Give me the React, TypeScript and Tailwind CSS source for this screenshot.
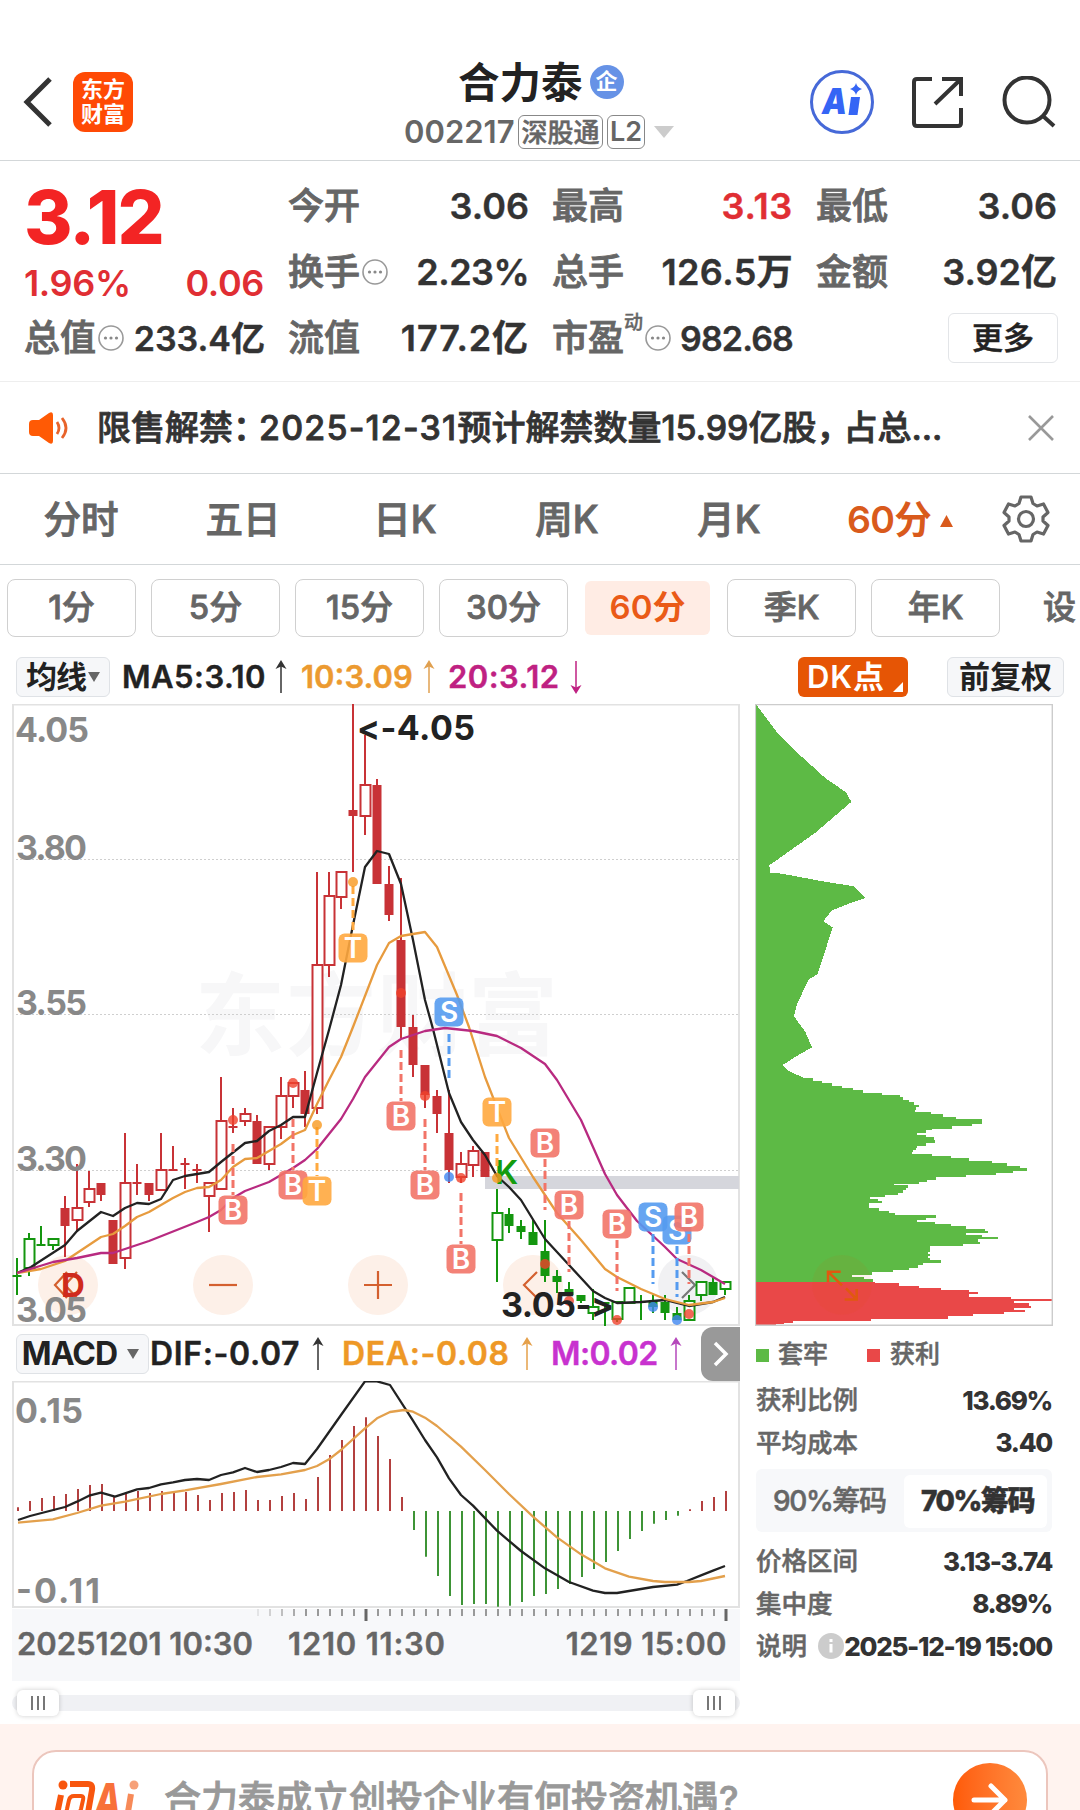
import type { ReactNode } from "react";

type Pt = [number, number];

/* Candle: high, low, body top, body bottom, kind.
   Upper case = hollow body, lower case = filled body. */
type Candle = [number, number, number, number, "R" | "r" | "G" | "g"];

const CANDLES: Candle[] = [
  [1258, 1295, 1275, 1277, "g"],
  [1233, 1276, 1239, 1268, "G"],
  [1226, 1246, 1244, 1246, "g"],
  [1238, 1250, 1239, 1245, "G"],
  [1196, 1257, 1208, 1226, "r"],
  [1164, 1231, 1208, 1220, "R"],
  [1171, 1207, 1189, 1202, "R"],
  [1183, 1201, 1183, 1195, "r"],
  [1220, 1264, 1220, 1264, "r"],
  [1133, 1269, 1183, 1258, "R"],
  [1164, 1195, 1182, 1184, "r"],
  [1183, 1201, 1183, 1195, "r"],
  [1133, 1190, 1170, 1190, "R"],
  [1146, 1171, 1169, 1171, "r"],
  [1158, 1189, 1163, 1165, "r"],
  [1164, 1183, 1169, 1171, "r"],
  [1183, 1232, 1183, 1196, "R"],
  [1077, 1189, 1121, 1189, "R"],
  [1108, 1133, 1126, 1128, "r"],
  [1108, 1126, 1114, 1121, "R"],
  [1115, 1164, 1121, 1164, "r"],
  [1127, 1170, 1127, 1164, "R"],
  [1077, 1139, 1096, 1127, "R"],
  [1083, 1108, 1083, 1096, "R"],
  [1071, 1127, 1090, 1114, "r"],
  [872, 1114, 965, 1108, "R"],
  [872, 977, 896, 965, "R"],
  [872, 909, 872, 897, "R"],
  [704, 872, 810, 816, "r"],
  [735, 835, 785, 816, "R"],
  [779, 884, 785, 884, "r"],
  [866, 921, 884, 915, "r"],
  [878, 1038, 940, 1027, "r"],
  [1015, 1077, 1027, 1065, "r"],
  [1065, 1108, 1065, 1095, "r"],
  [1090, 1133, 1096, 1114, "r"],
  [1090, 1183, 1133, 1170, "r"],
  [1152, 1183, 1164, 1177, "R"],
  [1146, 1177, 1151, 1165, "R"],
  [1152, 1177, 1152, 1177, "r"],
  [1189, 1282, 1213, 1240, "G"],
  [1208, 1233, 1214, 1226, "g"],
  [1220, 1239, 1226, 1232, "g"],
  [1220, 1245, 1232, 1245, "g"],
  [1220, 1282, 1251, 1276, "g"],
  [1270, 1293, 1276, 1282, "g"],
  [1282, 1296, 1289, 1295, "g"],
  [1295, 1303, 1295, 1301, "g"],
  [1289, 1320, 1307, 1313, "G"],
  [1302, 1326, 1302, 1304, "g"],
  [1302, 1322, 1302, 1319, "G"],
  [1288, 1303, 1288, 1303, "G"],
  [1295, 1320, 1301, 1303, "g"],
  [1295, 1313, 1301, 1307, "g"],
  [1295, 1320, 1302, 1313, "g"],
  [1307, 1320, 1313, 1320, "g"],
  [1295, 1320, 1301, 1320, "G"],
  [1282, 1301, 1282, 1295, "G"],
  [1277, 1295, 1282, 1295, "g"],
  [1282, 1295, 1282, 1289, "G"],
];

const MA5: Pt[] = [[17, 1273], [31, 1267], [65, 1245], [77, 1231], [101, 1212], [113, 1216], [125, 1208], [137, 1203], [149, 1204], [161, 1199], [173, 1180], [185, 1176], [209, 1172], [221, 1162], [245, 1143], [257, 1141], [269, 1131], [281, 1125], [293, 1117], [305, 1117], [317, 1073], [329, 1030], [341, 985], [353, 925], [365, 867], [377, 851], [389, 854], [401, 884], [413, 940], [425, 1000], [433, 1029], [449, 1093], [461, 1122], [473, 1140], [485, 1155], [497, 1176], [509, 1187], [521, 1200], [545, 1239], [569, 1265], [593, 1291], [605, 1298], [617, 1303], [641, 1302], [665, 1300], [689, 1306], [713, 1302], [725, 1297]];
const MA10: Pt[] = [[17, 1273], [41, 1269], [65, 1261], [101, 1237], [113, 1234], [125, 1226], [137, 1217], [149, 1212], [173, 1198], [185, 1192], [197, 1188], [209, 1187], [221, 1180], [233, 1167], [245, 1159], [257, 1158], [281, 1144], [293, 1135], [305, 1130], [317, 1104], [329, 1080], [341, 1057], [353, 1027], [377, 965], [389, 943], [401, 936], [425, 932], [437, 947], [457, 995], [469, 1027], [485, 1077], [509, 1138], [533, 1177], [557, 1213], [581, 1240], [605, 1269], [617, 1277], [641, 1289], [665, 1299], [689, 1305], [713, 1302], [725, 1298]];
const MA20: Pt[] = [[17, 1273], [53, 1262], [77, 1258], [101, 1253], [113, 1253], [149, 1241], [197, 1222], [209, 1217], [221, 1210], [233, 1198], [245, 1191], [269, 1182], [293, 1168], [305, 1160], [317, 1149], [341, 1119], [353, 1099], [365, 1077], [389, 1047], [401, 1039], [425, 1031], [445, 1028], [473, 1031], [497, 1036], [521, 1048], [545, 1064], [557, 1080], [581, 1120], [605, 1174], [617, 1195], [637, 1221], [665, 1247], [677, 1259], [701, 1270], [725, 1284]];

/* Trade marks: letter, x, badge centre y, dash from, dash to, dot y */
const MARKS: ["B" | "S" | "T", number, number, number, number, number][] = [
  ["B", 233, 1210, 1144, 1195, 1120],
  ["B", 293, 1185, 1119, 1170, 1083],
  ["T", 317, 1191, 1127, 1176, 1125],
  ["T", 353, 948, 886, 933, 882],
  ["B", 401, 1116, 1050, 1101, 993],
  ["B", 425, 1185, 1119, 1170, 1096],
  ["S", 449, 1012, 1034, 1080, 1177],
  ["B", 461, 1259, 1193, 1244, 1178],
  ["T", 497, 1112, 1134, 1170, 1178],
  ["B", 545, 1143, 1159, 1210, 1264],
  ["B", 569, 1205, 1221, 1272, 1301],
  ["B", 617, 1224, 1240, 1291, 1320],
  ["S", 653, 1217, 1234, 1284, 1307],
  ["S", 677, 1230, 1246, 1297, 1320],
  ["B", 689, 1217, 1234, 1284, 1314],
];

const MARK_FILL = { B: "#f27468", T: "#ffa93f", S: "#559bf0" };
const DOT_FILL = { B: "#f0412c", T: "#f8981f", S: "#3f86f0" };

const DIF: Pt[] = [[18, 600], [30, 588], [65, 561], [77, 545], [89, 527], [101, 518], [115, 530], [125, 520], [137, 508], [149, 504], [161, 493], [173, 487], [185, 480], [197, 477], [209, 480], [221, 465], [233, 457], [245, 444], [257, 456], [269, 450], [281, 441], [293, 429], [305, 432], [317, 387], [341, 285], [365, 184], [377, 184], [390, 195], [413, 302], [425, 360], [437, 412], [449, 475], [461, 525], [473, 557], [497, 632], [521, 693], [545, 745], [569, 786], [593, 812], [605, 819], [617, 819], [653, 801], [677, 794], [687, 783], [701, 766], [713, 752], [725, 738]];
const DEA: Pt[] = [[18, 608], [53, 598], [77, 579], [101, 557], [125, 545], [161, 522], [185, 511], [221, 492], [257, 471], [281, 463], [305, 450], [317, 438], [329, 418], [341, 390], [365, 325], [377, 295], [390, 276], [404, 270], [413, 275], [425, 293], [437, 318], [461, 380], [485, 450], [509, 522], [533, 590], [557, 652], [581, 703], [605, 745], [629, 770], [653, 783], [665, 786], [689, 786], [701, 783], [725, 768]];
const MACD_BARS = [562, 543, 534, 528, 522, 507, 495, 492, 530, 519, 513, 519, 513, 513, 516, 525, 540, 519, 516, 510, 540, 540, 528, 519, 537, 471, 405, 360, 318, 292, 348, 417, 531, 630, 710, 768, 828, 855, 852, 852, 860, 857, 846, 828, 822, 807, 792, 771, 747, 726, 693, 657, 633, 611, 600, 587, 568, 543, 531, 513];

/* Chip distribution rows as [y, width]; smooth upper part, stepped lower part */
const CHIP_SMOOTH: Pt[] = [[35, 48], [107, 115], [150, 170], [212, 255], [247, 318], [270, 334], [345, 225], [423, 88], [441, 90], [443, 125], [459, 230], [474, 343], [502, 377], [516, 325], [532, 275], [558, 250], [573, 278], [685, 233], [698, 207], [755, 172], [787, 162], [825, 196], [862, 216], [882, 172], [905, 127], [920, 148], [935, 190]];
const CHIP_STEPS: Pt[] = [[938, 218], [944, 245], [949, 275], [955, 306], [961, 338], [966, 368], [972, 425], [976, 480], [982, 490], [988, 508], [993, 522], [1000, 536], [1006, 528], [1013, 525], [1018, 573], [1023, 610], [1029, 648], [1034, 725], [1040, 725], [1046, 695], [1052, 636], [1058, 575], [1062, 557], [1068, 530], [1074, 557], [1079, 582], [1085, 584], [1093, 557], [1099, 530], [1104, 527], [1110, 518], [1115, 516], [1119, 575], [1124, 632], [1130, 687], [1136, 755], [1141, 800], [1147, 840], [1153, 860], [1159, 818], [1165, 767], [1170, 677], [1175, 587], [1181, 560], [1187, 537], [1191, 463], [1195, 503], [1201, 497], [1207, 490], [1213, 475], [1218, 436], [1222, 390], [1227, 413], [1232, 425], [1238, 388], [1250, 417], [1256, 447], [1262, 465], [1267, 587], [1273, 558], [1278, 530], [1283, 585], [1289, 632], [1294, 677], [1299, 735], [1305, 743], [1310, 678], [1314, 726], [1320, 775], [1325, 715], [1331, 720], [1336, 668], [1342, 571], [1355, 563], [1360, 571], [1366, 563], [1371, 570], [1376, 603], [1381, 548], [1387, 535], [1393, 508], [1398, 458], [1404, 395], [1410, 337], [1416, 372], [1421, 400], [1427, 405]];
const CHIP_RED: Pt[] = [[1427, 405], [1431, 476], [1437, 538], [1442, 602], [1448, 687], [1453, 715], [1458, 687], [1464, 812], [1469, 936], [1474, 823], [1479, 868], [1486, 872], [1490, 823], [1495, 855], [1500, 793], [1506, 698], [1511, 625], [1516, 393], [1521, 158], [1526, 133], [1530, 107], [1532, 107]];

const line = (pts: Pt[]) => pts.map((p) => p.join(",")).join(" ");
const macdLine = (pts: Pt[]) => pts.map(([x, y]) => `${x},${1320 + y / 3}`).join(" ");
const steps = (pts: Pt[]) => pts.map(([y, w], i) => `H${w}V${pts[i + 1]?.[0] ?? y}`).join("");

/* ── Small icons ── */
function MoreDots() {
  return (
    <svg viewBox="0 0 26 26" className="ml-[2px] size-[26px] shrink-0" fill="none" stroke="#999" strokeWidth="1.6">
      <circle cx="13" cy="13" r="12" />
      <g fill="#888" stroke="none">
        <circle cx="7.5" cy="13" r="1.6" />
        <circle cx="13" cy="13" r="1.6" />
        <circle cx="18.5" cy="13" r="1.6" />
      </g>
    </svg>
  );
}

function Arrow({ color, down = false }: { color: string; down?: boolean }) {
  return (
    <svg viewBox="0 0 12 34" className={down ? "h-[34px] w-3 shrink-0 rotate-180" : "h-[34px] w-3 shrink-0"}>
      <path d="M6 4V33" stroke={color} strokeWidth="1.5" />
      <path d="M6 0L11.5 9L6 6.5L0.5 9Z" fill={color} />
    </svg>
  );
}

function Caret({ className }: { className: string }) {
  return (
    <svg viewBox="0 0 12 10" className={className} fill="currentColor" preserveAspectRatio="none">
      <path d="M0 0H12L6 10Z" />
    </svg>
  );
}

/* ── Quote cell: label on the left, value on the right ── */
function Cell({ label, value, extra, className = "text-[#333]" }: { label: string; value: ReactNode; extra?: ReactNode; className?: string }) {
  return (
    <div className="flex h-[66px] items-center justify-between whitespace-nowrap">
      <span className="flex items-center font-medium text-[#666] [-webkit-text-stroke:0.9px]">
        {label}
        {extra}
      </span>
      <span className={`-mr-[1px] font-semibold [-webkit-text-stroke:0.4px] ${className}`}>{value}</span>
    </div>
  );
}

function Header() {
  return (
    <header className="flex h-[161px] items-start border-b border-[#d3d7d9] pt-[60px]">
      <svg viewBox="0 0 30 50" className="mt-[17px] ml-[23px] h-[50px] w-[30px] shrink-0" fill="none" stroke="#333" strokeWidth="5">
        <path d="M27 2L4 25L27 48" />
      </svg>
      <div className="mt-3 ml-5 flex size-[60px] shrink-0 flex-col items-center justify-center rounded-xl bg-[#ff4a05] text-[22px] leading-[25px] font-bold text-white">
        <span>东方</span>
        <span>财富</span>
      </div>
      <div className="ml-[271px] flex w-[285px] shrink-0 flex-col">
        <div className="ml-[54px] flex h-[46px] items-center text-[41.500px] font-bold text-[#222]">
          合力泰
          <span className="mb-[3px] ml-[7px] flex size-[34px] items-center justify-center rounded-full bg-[#6692e6] text-[22px] font-bold text-white">企</span>
        </div>
        <div className="mt-2 flex h-[36px] items-center gap-1 whitespace-nowrap text-[#666]">
          <span className="w-[110px] text-[31px] font-semibold">002217</span>
          <span className="flex h-[34px] w-[85px] items-center justify-center rounded-md border-[1.5px] border-[#888] text-[26px] font-medium [-webkit-text-stroke:0.5px]">深股通</span>
          <span className="flex h-[34px] w-[38px] items-center justify-center rounded-md border-[1.5px] border-[#888] text-[27px] font-semibold">L2</span>
          <Caret className="ml-[5px] h-3 w-5 shrink-0 text-[#ccc]" />
        </div>
      </div>
      <svg viewBox="0 0 66 66" className="mt-[9px] ml-[120px] size-[66px] shrink-0">
        <circle cx="33" cy="33" r="30.5" fill="none" stroke="#4669d8" strokeWidth="3" />
        <text x="13" y="45" fontFamily="Inter" fontWeight="900" fontStyle="italic" fontSize="36" fill="#3565f5" textLength="25" lengthAdjust="spacingAndGlyphs">A</text>
        <path d="M42 28H51L48.500 46H39.500Z" fill="#3565f5" />
        <path d="M47 14Q48 18.500 53 20Q48 21.500 47 26Q46 21.500 41 20Q46 18.500 47 14Z" fill="#3565f5" />
      </svg>
      <svg viewBox="0 0 52 52" className="mt-4 ml-9 size-[52px] shrink-0" fill="none" stroke="#333" strokeWidth="4">
        <path d="M21 3H6Q3 3 3 6V47Q3 50 6 50H47Q50 50 50 47V32" />
        <path d="M31 3H50V20M50 3L24 28" />
      </svg>
      <svg viewBox="0 0 54 54" className="mt-4 ml-[39px] size-[54px] shrink-0" fill="none" stroke="#333" strokeWidth="4">
        <circle cx="25" cy="24" r="22.500" />
        <path d="M41 40L52 50" />
      </svg>
    </header>
  );
}

function Quote() {
  return (
    <section className="h-[221px] border-b border-[#eee] px-6 pt-3 text-[36px]">
      <div className="grid grid-cols-4 gap-x-6">
        <div className="row-span-2 h-[132px] text-[#e02e33]">
          <div className="h-[87px] pt-[3px] text-[74px] leading-[82px] font-extrabold tracking-[-0.025em] text-[#f32424]">3.12</div>
          <div className="flex justify-between leading-[46px] font-semibold tracking-[-0.01em]">
            <span>1.96%</span>
            <span>0.06</span>
          </div>
        </div>
        <Cell label="今开" value="3.06" />
        <Cell label="最高" value="3.13" className="text-[#e02e33] tracking-[0.02em]" />
        <Cell label="最低" value="3.06" />
        <Cell label="换手" value="2.23%" extra={<MoreDots />} className="text-[#333] tracking-[-0.015em]" />
        <Cell label="总手" value="126.5万" className="text-[#333] tracking-[0.01em]" />
        <Cell label="金额" value="3.92亿" />
        <Cell label="总值" value={<span className="text-[34px]">233.4亿</span>} extra={<MoreDots />} />
        <Cell label="流值" value="177.2亿" className="text-[#333] tracking-[0.025em]" />
        <Cell
          label="市盈"
          value={<span className="text-[34px] tracking-[-0.025em]">982.68</span>}
          extra={
            <>
              <sup className="-top-4 text-[19px] leading-none [-webkit-text-stroke:0.4px]">动</sup>
              <MoreDots />
            </>
          }
        />
        <div className="flex h-[66px] items-center justify-end">
          <button className="-mr-[2px] h-[50px] w-[110px] rounded-md border border-[#e3e5e8] text-[31px] font-medium text-[#222] [-webkit-text-stroke:0.5px]">更多</button>
        </div>
      </div>
    </section>
  );
}

function Notice() {
  return (
    <section className="flex h-[92px] items-center border-b border-[#d3d7d9]">
      <svg viewBox="0 0 40 32" className="ml-[29px] h-8 w-10">
        <path d="M4 8H10L20 1Q24 -1 24 3V29Q24 33 20 31L10 24H4Q0 24 0 20V12Q0 8 4 8Z" fill="#ff5a05" />
        <path d="M28 10Q32 16 28 22M33 6Q41 16 33 26" fill="none" stroke="#e8632a" strokeWidth="2.8" />
      </svg>
      <p className="ml-[28px] w-[881px] text-[34px] font-medium whitespace-nowrap text-[#333] [-webkit-text-stroke:0.8px]">
        限售解禁<span className="tracking-[-8px]">：</span>
        <span className="tracking-[0.035em]">2025-12-31</span>预计解禁数量<span>15.99</span>亿股
        <span className="tracking-[-7px]">，</span>占总...
      </p>
      <svg viewBox="0 0 26 26" className="ml-[50px] size-[26px]" stroke="#999" strokeWidth="2.6">
        <path d="M1 1L25 25M25 1L1 25" />
      </svg>
    </section>
  );
}

function Tabs() {
  return (
    <nav className="flex h-[91px] items-center border-b border-[#d3d7d9] pt-[3px] text-[37.500px] font-medium text-[#666]">
      {["分时", "五日", "日K", "周K", "月K"].map((t) => (
        <span key={t} className="w-[162px] text-center [-webkit-text-stroke:0.9px]">
          {t}
        </span>
      ))}
      <span className="ml-[37px] flex w-[154px] items-center font-semibold tracking-[-0.02em] text-[#d95a1c]">
        60分
        <Caret className="ml-[9px] h-3 w-[13px] rotate-180" />
      </span>
      <svg viewBox="-25 -25 50 50" className="-mt-1 size-[50px]" fill="none" stroke="#666" strokeWidth="3.200" strokeLinejoin="round">
        <path d="M-5 -22H5L7 -15.500L11 -13L17.500 -15L22 -6.500L17 -2V2L22 6.500L17.500 15L11 13L7 15.500L5 22H-5L-7 15.500L-11 13L-17.500 15L-22 6.500L-17 2V-2L-22 -6.500L-17.500 -15L-11 -13L-7 -15.500Z" />
        <circle r="7.500" />
      </svg>
    </nav>
  );
}

function Periods() {
  return (
    <div className="flex h-[85px] items-center gap-[15px] overflow-hidden pl-[7px] text-[33px] font-medium whitespace-nowrap text-[#666]">
      {["1分", "5分", "15分", "30分", "60分", "季K", "年K"].map((p) => (
        <span
          key={p}
          className={
            p === "60分"
              ? "mx-[2px] flex h-[54px] w-[125px] shrink-0 items-center justify-center rounded-md bg-[#ffece4] font-semibold text-[#ea5a17]"
              : "flex h-[58px] w-[129px] shrink-0 items-center justify-center rounded-lg border-[1.5px] border-[#d0d0d0] [-webkit-text-stroke:0.8px]"
          }
        >
          {p}
        </span>
      ))}
      <span className="ml-[28px] [-webkit-text-stroke:0.8px]">设</span>
    </div>
  );
}

function IndicatorBar() {
  return (
    <div className="flex h-[54px] items-center pl-4 text-[31px] font-semibold whitespace-nowrap">
      <span className="flex h-10 w-[94px] items-center justify-center gap-[2px] rounded-md border border-[#dfe2e6] bg-[#f6f7f9] tracking-[-0.03em] text-[#222]">
        均线
        <Caret className="h-[10px] w-3 text-[#666]" />
      </span>
      <span className="ml-3 w-[153px] tracking-[0.015em] text-[#222] [-webkit-text-stroke:0.4px]">MA5:3.10</span>
      <Arrow color="#333" />
      <span className="ml-[14px] w-[122px] text-[#ec9a30] [-webkit-text-stroke:0.4px]">10:3.09</span>
      <Arrow color="#e0a050" />
      <span className="ml-[13px] w-[122px] tracking-[0.015em] text-[#bf2182] [-webkit-text-stroke:0.4px]">20:3.12</span>
      <Arrow color="#bf2182" down />
      <span className="relative ml-[216px] flex h-10 w-[110px] items-center rounded-md bg-[#e65505] pl-[9px] tracking-[0.03em] text-white">
        DK点
        <svg viewBox="0 0 10 10" className="absolute right-[5px] bottom-[5px] size-[10px]" fill="#fff">
          <path d="M10 0V10H0Z" />
        </svg>
      </span>
      <span className="ml-[39px] flex h-10 w-[117px] items-center justify-center rounded-md border border-[#dfe2e6] bg-[#f6f7f9] text-[#222]">前复权</span>
    </div>
  );
}

function RoundButton({ x, d, grey = false }: { x: number; d: string; grey?: boolean }) {
  return (
    <g transform={`translate(${x} 1285)`}>
      <circle r="30" fill={grey ? "#f1f1f3" : "#fdf0e8"} />
      <path d={d} fill="none" stroke={grey ? "#777" : "#d4602f"} strokeWidth="2.2" />
    </g>
  );
}

function PriceChart() {
  return (
    <svg viewBox="12 704 728 622" className="block h-[622px] w-[728px] [font-feature-settings:'calt'_0]" fontFamily="Inter" fontWeight="600">
      <g fontFamily="Noto Sans CJK SC" fontWeight="700" fontSize="90" fill="#f7f7f8">
        <text x="195" y="1048" textLength="363">东方财富</text>
      </g>
      <g stroke="#cfcfcf" strokeDasharray="2 2">
        <path d="M12 859.500H739M12 1014.500H739M12 1170.500H739" />
      </g>
      <rect x="13" y="704.500" width="726" height="620.500" fill="none" stroke="#e2e2e2" strokeWidth="2" />
      <rect x="485" y="1176" width="254" height="13" fill="#d5d6dc" />

      <RoundButton x={68} d="M-1 -13L-13 0L-1 13M9 -13L-3 0L9 13" />
      <text x="61" y="1297" fontSize="33" fontWeight="700" fill="#cf2a1c">D</text>
      <RoundButton x={223} d="M-14 0H14" />
      <RoundButton x={378} d="M-14 0H14M0 -14V14" />
      <RoundButton x={533} d="M4 -13L-9 0L4 13" />
      <RoundButton x={688} d="M-6 -13L7 0L-6 13" grey />

      {CANDLES.map(([hi, lo, top, bot, kind], i) => {
        const x = 17 + i * 12;
        const color = kind === "R" || kind === "r" ? "#c83236" : "#14960f";
        const hollow = kind === "R" || kind === "G";
        return (
          <g key={i} fill={hollow ? "#fff" : color} stroke={color} strokeWidth="2">
            <path d={`M${x} ${hi}V${lo}`} />
            {hollow ? (
              <rect x={x - 4.5} y={top} width="10" height={bot - top} />
            ) : (
              <rect x={x - 4.5} y={top} width="9" height={bot - top} stroke="none" />
            )}
          </g>
        );
      })}

      <g fontSize="34" fontWeight="700" fill="#888">
        <text x="15" y="742" textLength="74">4.05</text>
        <text x="16" y="860" textLength="71">3.80</text>
        <text x="16" y="1015" textLength="71">3.55</text>
        <text x="16" y="1171" textLength="71">3.30</text>
        <text x="16" y="1322" textLength="71">3.05</text>
      </g>

      <g fill="none" strokeWidth="2.300" strokeLinejoin="round">
        <polyline points={line(MA5)} stroke="#222" />
        <polyline points={line(MA10)} stroke="#e79b3e" />
        <polyline points={line(MA20)} stroke="#b82a80" />
      </g>

      <text x="495" y="1184" fontSize="33" fontWeight="600" fill="#149c0e">K</text>

      {MARKS.map(([letter, x, y, from, to, dot], i) => (
        <g key={i}>
          <path d={`M${x} ${from}V${to}`} stroke={MARK_FILL[letter]} strokeWidth="3" strokeDasharray="8 4" />
          <circle cx={x} cy={dot} r="5" fill={DOT_FILL[letter]} opacity=".8" />
          <rect x={x - 14.5} y={y - 14.5} width="29" height="29" rx="6" fill={MARK_FILL[letter]} opacity=".9" />
          <text x={x} y={y + 10} fontSize="28" fontWeight="600" fill="#fff" textAnchor="middle">{letter}</text>
        </g>
      ))}

      <g fontSize="34" fontWeight="700" fill="#222">
        <text x="357" y="740" textLength="118">&lt;-4.05</text>
        <text x="501" y="1317" textLength="113">3.05-&gt;</text>
      </g>
    </svg>
  );
}

function MacdBar() {
  return (
    <div className="flex h-[55px] items-center pl-1 text-[32px] font-semibold whitespace-nowrap">
      <span className="flex h-10 w-[133px] items-center justify-center gap-[10px] rounded-md border border-[#dfe2e6] bg-[#f6f7f9] pr-1 font-bold tracking-[-0.03em] text-[#222]">
        MACD
        <Caret className="h-[10px] w-3 text-[#666]" />
      </span>
      <span className="ml-[1px] w-[162px] tracking-[0.02em] text-[#222] [-webkit-text-stroke:0.4px]">DIF:-0.07</span>
      <Arrow color="#333" />
      <span className="ml-[18px] w-[179px] tracking-[0.02em] text-[#ee9826] [-webkit-text-stroke:0.4px]">DEA:-0.08</span>
      <Arrow color="#e5a04a" />
      <span className="ml-[18px] w-[119px] tracking-[-0.02em] text-[#c832cf] [-webkit-text-stroke:0.4px]">M:0.02</span>
      <Arrow color="#b548bb" />
      <span className="ml-auto flex h-[54px] w-[39px] items-center justify-center rounded-l-xl bg-[#999]">
        <svg viewBox="0 0 16 26" className="h-[26px] w-4" fill="none" stroke="#fff" strokeWidth="3.500">
          <path d="M2 2L13 13L2 24" />
        </svg>
      </span>
    </div>
  );
}

function MacdChart() {
  return (
    <svg viewBox="12 1381 728 228" className="block h-[228px] w-[728px]" fontFamily="Inter" fontWeight="600">
      <rect x="13" y="1381.500" width="726" height="225.500" fill="none" stroke="#e2e2e2" strokeWidth="2" />
      {MACD_BARS.map((v, i) => (
        <path key={i} d={`M${18 + i * 12} 1511V${1320 + v / 3}`} stroke={v < 573 ? "#b3403f" : "#3e9436"} strokeWidth="2" />
      ))}
      <g fill="none" strokeWidth="2.300" strokeLinejoin="round">
        <polyline points={macdLine(DIF)} stroke="#222" />
        <polyline points={macdLine(DEA)} stroke="#e3a04c" />
      </g>
      <g fontSize="34" fontWeight="700" fill="#888">
        <text x="15" y="1423" textLength="68">0.15</text>
        <text x="16" y="1603" textLength="84">-0.11</text>
      </g>
    </svg>
  );
}

function TimeAxis() {
  return (
    <div className="h-[72px] bg-[#f7f8fa]">
      <svg viewBox="12 1609 728 14" className="block h-[14px] w-[728px]">
        {MACD_BARS.map((_, i) => {
          const major = i === 29 || i === 59;
          return i < 20 ? null : (
            <path
              key={i}
              d={`M${18 + i * 12} 1609V${major ? 1621 : 1616}`}
              stroke={major ? "#666" : "#999"}
              strokeWidth={major ? 3 : 2}
              opacity={Math.min(1, (i - 19) / 5)}
            />
          );
        })}
      </svg>
      <div className="flex h-[42px] items-center text-[31px] font-semibold whitespace-nowrap text-[#666] [-webkit-text-stroke:0.4px]">
        <span className="ml-[5px] w-[271px]">20251201 10:30</span>
        <span className="tracking-[0.025em]">1210 11:30</span>
        <span className="mr-[13px] ml-auto tracking-[0.015em]">1219 15:00</span>
      </div>
    </div>
  );
}

function RangeSlider() {
  const knob = (
    <span className="flex h-[26px] w-[42px] items-center justify-center gap-1 rounded-md bg-white shadow-[0_0_5px_rgba(0,0,0,0.2)]">
      <i className="h-[14px] w-[2px] bg-[#777]" />
      <i className="h-[14px] w-[2px] bg-[#777]" />
      <i className="h-[14px] w-[2px] bg-[#777]" />
    </span>
  );
  return (
    <div className="mt-[14px] flex h-4 items-center justify-between rounded-full bg-[#f0f1f4] px-[5px]">
      {knob}
      {knob}
    </div>
  );
}

function ChipChart() {
  return (
    <svg viewBox="45 34 894 1500" preserveAspectRatio="none" className="block h-[622px] w-[298px]">
      <g shapeRendering="crispEdges">
        <path d={`M48 35L${CHIP_SMOOTH.map(([y, w]) => `${w} ${y}`).join("L")}${steps(CHIP_STEPS)}H48Z`} fill="#5dba45" />
        <path d={`M48 1427${steps(CHIP_RED)}H48Z`} fill="#e94848" />
      </g>
      <rect x="46" y="35" width="891" height="1497" fill="none" stroke="#ccc" strokeWidth="1.500" vectorEffect="non-scaling-stroke" />
      <ellipse cx="306" cy="1435" rx="90" ry="72" fill="#e65505" opacity=".07" />
      <path d="M264 1428V1403H302M264 1403L306 1436M350 1445V1470H314M350 1470L318 1443" fill="none" stroke="#e0590f" strokeWidth="2.500" vectorEffect="non-scaling-stroke" />
    </svg>
  );
}

function Row({ label, value, icon }: { label: string; value: string; icon?: ReactNode }) {
  return (
    <div className="flex h-[42.500px] items-center justify-between whitespace-nowrap">
      <span className="flex items-center text-[25.500px] font-medium text-[#666] [-webkit-text-stroke:0.5px]">
        {label}
        {icon}
      </span>
      <span className="text-[26px] font-extrabold tracking-[-0.05em] text-[#333]">{value}</span>
    </div>
  );
}

function ChipPanel() {
  return (
    <div className="ml-[15px] w-[298px] shrink-0">
      <ChipChart />
      <div className="mt-[9px] flex h-[40px] items-center pl-[1px] text-[25px] font-medium text-[#666] [-webkit-text-stroke:0.5px]">
        <i className="mr-[9px] size-[13px] bg-[#5dba45]" />
        套牢
        <i className="mr-[10px] ml-[39px] size-[13px] bg-[#e94848]" />
        获利
      </div>
      <div className="mt-[4px] pr-[1px] pl-[1px]">
        <Row label="获利比例" value="13.69%" />
        <Row label="平均成本" value="3.40" />
        <div className="my-[5px] flex h-[63px] items-center justify-between rounded-md bg-[#f7f8fa] pt-px pr-[5px] pl-[17px] text-[28px] tracking-[-0.05em]">
          <span className="font-medium text-[#666] [-webkit-text-stroke:0.5px]">90%筹码</span>
          <span className="flex h-[53px] w-[143px] items-center justify-center rounded-md bg-white pl-1 font-extrabold text-[#333] [-webkit-text-stroke:0.5px]">70%筹码</span>
        </div>
        <div className="pt-[3px]">
          <Row label="价格区间" value="3.13-3.74" />
          <Row label="集中度" value="8.89%" />
          <Row
            label="说明"
            value="2025-12-19 15:00"
            icon={
              <svg viewBox="0 0 26 26" className="ml-[11px] size-[26px]">
                <circle cx="13" cy="13" r="13" fill="#ccc" />
                <path d="M13 11V19.500M13 6V9" stroke="#fff" strokeWidth="3" />
              </svg>
            }
          />
        </div>
      </div>
    </div>
  );
}

function AskBar() {
  return (
    <section className="h-[86px] overflow-hidden bg-[#fff3ef] pt-[26px]">
      <div className="mx-[32px] flex h-[100px] items-center rounded-[24px] border-2 border-[#ecc6bd] bg-white pr-[19px] pl-[18px]">
        <svg viewBox="0 0 88 44" className="h-11 w-[88px]">
          <g fill="none" stroke="#f8560e" strokeWidth="6">
            <path d="M9 17L3 46M18 6H36Q41 6 40 12L34 46" />
            <path d="M17 22Q18 18 22 18H29Q32 18 31 22L29 31Q28 35 24 35H17Q14 35 15 31Z" strokeWidth="4" />
          </g>
          <circle cx="11" cy="7" r="4.500" fill="#f8560e" />
          <text x="42" y="40" fontFamily="Inter" fontWeight="800" fontStyle="italic" fontSize="48" fill="#f8713a" textLength="27" lengthAdjust="spacingAndGlyphs">A</text>
          <circle cx="82" cy="7" r="4.500" fill="#f6a078" />
          <path d="M79 16L74 46" stroke="#f78a58" strokeWidth="6" />
        </svg>
        <span className="ml-6 text-[37px] font-medium whitespace-nowrap text-[#999] [-webkit-text-stroke:0.8px]">合力泰成立创投企业有何投资机遇?</span>
        <span className="ml-auto flex size-[74px] items-center justify-center rounded-full bg-linear-to-r from-[#ff5a05] to-[#ff8a3c]">
          <svg viewBox="0 0 38 34" className="h-[34px] w-[38px]" fill="none" stroke="#fff" strokeWidth="5" strokeLinecap="round" strokeLinejoin="round">
            <path d="M3 17H34M20 3L34 17L20 31" />
          </svg>
        </span>
      </div>
    </section>
  );
}

export default function App() {
  return (
    <div className="h-[1810px] w-[1080px] overflow-hidden bg-white font-['Inter','Noto_Sans_CJK_SC',sans-serif]">
      <Header />
      <Quote />
      <Notice />
      <Tabs />
      <Periods />
      <IndicatorBar />
      <div className="flex h-[1020px]">
        <div className="ml-3 w-[728px] shrink-0">
          <PriceChart />
          <MacdBar />
          <MacdChart />
          <TimeAxis />
          <RangeSlider />
        </div>
        <ChipPanel />
      </div>
      <AskBar />
    </div>
  );
}
